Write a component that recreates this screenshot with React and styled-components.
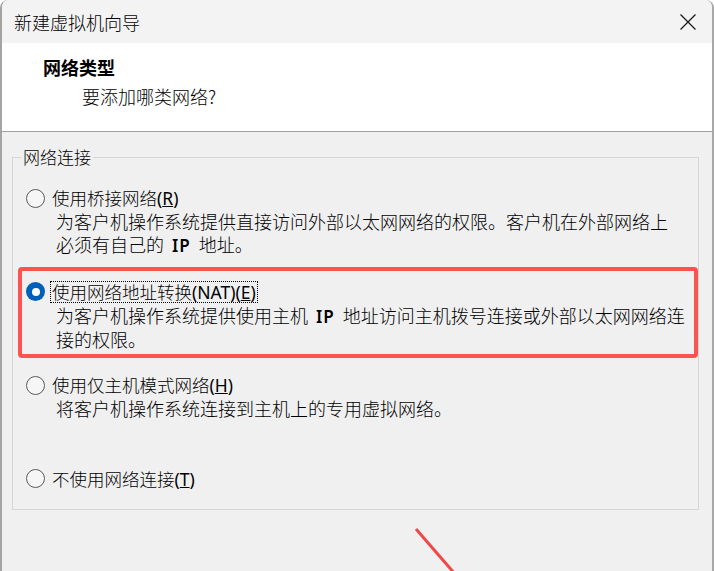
import React from 'react';
import styled, { createGlobalStyle } from 'styled-components';

const GlobalStyle = createGlobalStyle`
    html, body {
        margin: 0;
        padding: 0;
        background: #ffffff;
    }

    body {
        font-family: "Noto Sans CJK SC", "Noto Sans", sans-serif;
        color: #000;
    }
`;

const Window = styled.div`
    position: relative;
    width: 714px;
    height: 571px;
    box-sizing: border-box;
    display: flex;
    flex-direction: column;
    border-left: 2px solid #a4a4a4;
    border-right: 2px solid #a8a8a8;
    border-radius: 8px 8px 0 0;
    overflow: hidden;
    background: #f0f0f0;
`;

const TitleBar = styled.div`
    height: 43px;
    flex-shrink: 0;
    display: flex;
    align-items: center;
    justify-content: space-between;
    padding: 0 16px 0 12px;
    background: #f3f3f3;
`;

const Title = styled.span`
    font-size: 18px;
    line-height: 20px;
    font-weight: 300;
`;

const CloseButton = styled.svg`
    width: 16px;
    height: 16px;
    display: block;
`;

const Header = styled.div`
    height: 89px;
    flex-shrink: 0;
    box-sizing: border-box;
    padding: 13px 0 0 41px;
    background: #ffffff;
    border-bottom: 1px solid #a0a0a0;
`;

const Heading = styled.div`
    font-size: 18px;
    line-height: 22px;
    font-weight: 700;
`;

const SubHeading = styled.div`
    margin: 7px 0 0 39px;
    font-size: 18px;
    line-height: 22px;
    font-weight: 300;
`;

const Body = styled.div`
    flex: 1;
    padding: 15px 13px 0 10px;
`;

const Group = styled.fieldset`
    margin: 0;
    padding: 0;
    height: 363px;
    box-sizing: border-box;
    border: 1px solid #d6d6d6;
    min-width: 0;
`;

const GroupLabel = styled.legend`
    margin-left: 8px;
    padding: 0 2px;
    font-size: 17px;
    line-height: 20px;
    font-weight: 300;
`;

const OptionList = styled.div`
    display: flex;
    flex-direction: column;
    padding: 20px 0 0 13px;
`;

const Option = styled.div`
    position: relative;
    height: 93.5px;
    flex-shrink: 0;

    &:last-child {
        height: auto;
    }
`;

const OptionHead = styled.div`
    display: flex;
    align-items: center;
    height: 22px;
    gap: 5px;
`;

const Radio = styled.span`
    width: 19px;
    height: 19px;
    box-sizing: border-box;
    border-radius: 50%;
    display: flex;
    align-items: center;
    justify-content: center;
    border: ${p => (p.$checked ? 'none' : '1px solid #5a5a5a')};
    background: ${p => (p.$checked ? '#005fb8' : '#f6f6f6')};

    &:after {
        content: '';
        display: ${p => (p.$checked ? 'block' : 'none')};
        width: 8px;
        height: 8px;
        border-radius: 50%;
        background: #ffffff;
    }
`;

const OptionLabel = styled.span`
    height: 22px;
    box-sizing: border-box;
    padding: 0 1px;
    border: 1px dotted ${p => (p.$focused ? '#000' : 'transparent')};
    font-size: 17.5px;
    line-height: 20px;
    font-weight: 300;
    white-space: nowrap;
`;

const Latin = styled.span`
    font-family: "Noto Sans", sans-serif;
    font-weight: 400;
`;

const Desc = styled.div`
    margin: 1px 0 0 30px;
    font-size: 18px;
    line-height: 23px;
    font-weight: 300;
    white-space: nowrap;
`;

const Ip = styled.span`
    display: inline-block;
    margin: 0 8px;
    font-family: "Noto Sans", sans-serif;
    font-size: 17px;
    font-weight: 600;
    letter-spacing: 1px;
`;

const Highlight = styled.div`
    position: absolute;
    top: -13.5px;
    left: -8px;
    right: 0;
    bottom: 16px;
    border: 4.5px solid #fd5252;
    border-radius: 4px;
    pointer-events: none;
`;

const Arrow = styled.svg`
    position: absolute;
    left: 408px;
    top: 524px;
    width: 52px;
    height: 50px;
    pointer-events: none;
`;

const Key = ({ children }) => <u>{children}</u>;

const App = () => (
    <>
        <GlobalStyle />
        <Window>
            <TitleBar>
                <Title>新建虚拟机向导</Title>
                <CloseButton viewBox="0 0 16 16">
                    <path d="M0.5 0.5 L15.5 15.5 M15.5 0.5 L0.5 15.5" stroke="#1c1c1c" strokeWidth="1.3" fill="none" />
                </CloseButton>
            </TitleBar>

            <Header>
                <Heading>网络类型</Heading>
                <SubHeading>要添加哪类网络?</SubHeading>
            </Header>

            <Body>
                <Group>
                    <GroupLabel>网络连接</GroupLabel>
                    <OptionList>
                        <Option>
                            <OptionHead>
                                <Radio />
                                <OptionLabel>使用桥接网络<Latin>(<Key>R</Key>)</Latin></OptionLabel>
                            </OptionHead>
                            <Desc>
                                为客户机操作系统提供直接访问外部以太网网络的权限。客户机在外部网络上<br />
                                必须有自己的<Ip>IP</Ip>地址。
                            </Desc>
                        </Option>

                        <Option>
                            <Highlight />
                            <OptionHead>
                                <Radio $checked />
                                <OptionLabel $focused>使用网络地址转换<Latin>(NAT)(<Key>E</Key>)</Latin></OptionLabel>
                            </OptionHead>
                            <Desc>
                                为客户机操作系统提供使用主机<Ip>IP</Ip>地址访问主机拨号连接或外部以太网网络连<br />
                                接的权限。
                            </Desc>
                        </Option>

                        <Option>
                            <OptionHead>
                                <Radio />
                                <OptionLabel>使用仅主机模式网络<Latin>(<Key>H</Key>)</Latin></OptionLabel>
                            </OptionHead>
                            <Desc>将客户机操作系统连接到主机上的专用虚拟网络。</Desc>
                        </Option>

                        <Option>
                            <OptionHead>
                                <Radio />
                                <OptionLabel>不使用网络连接<Latin>(<Key>T</Key>)</Latin></OptionLabel>
                            </OptionHead>
                        </Option>
                    </OptionList>
                </Group>
            </Body>

            <Arrow viewBox="0 0 52 50">
                <line x1="6" y1="5" x2="45" y2="50" stroke="#f04848" strokeWidth="3" />
            </Arrow>
        </Window>
    </>
);

export default App;
